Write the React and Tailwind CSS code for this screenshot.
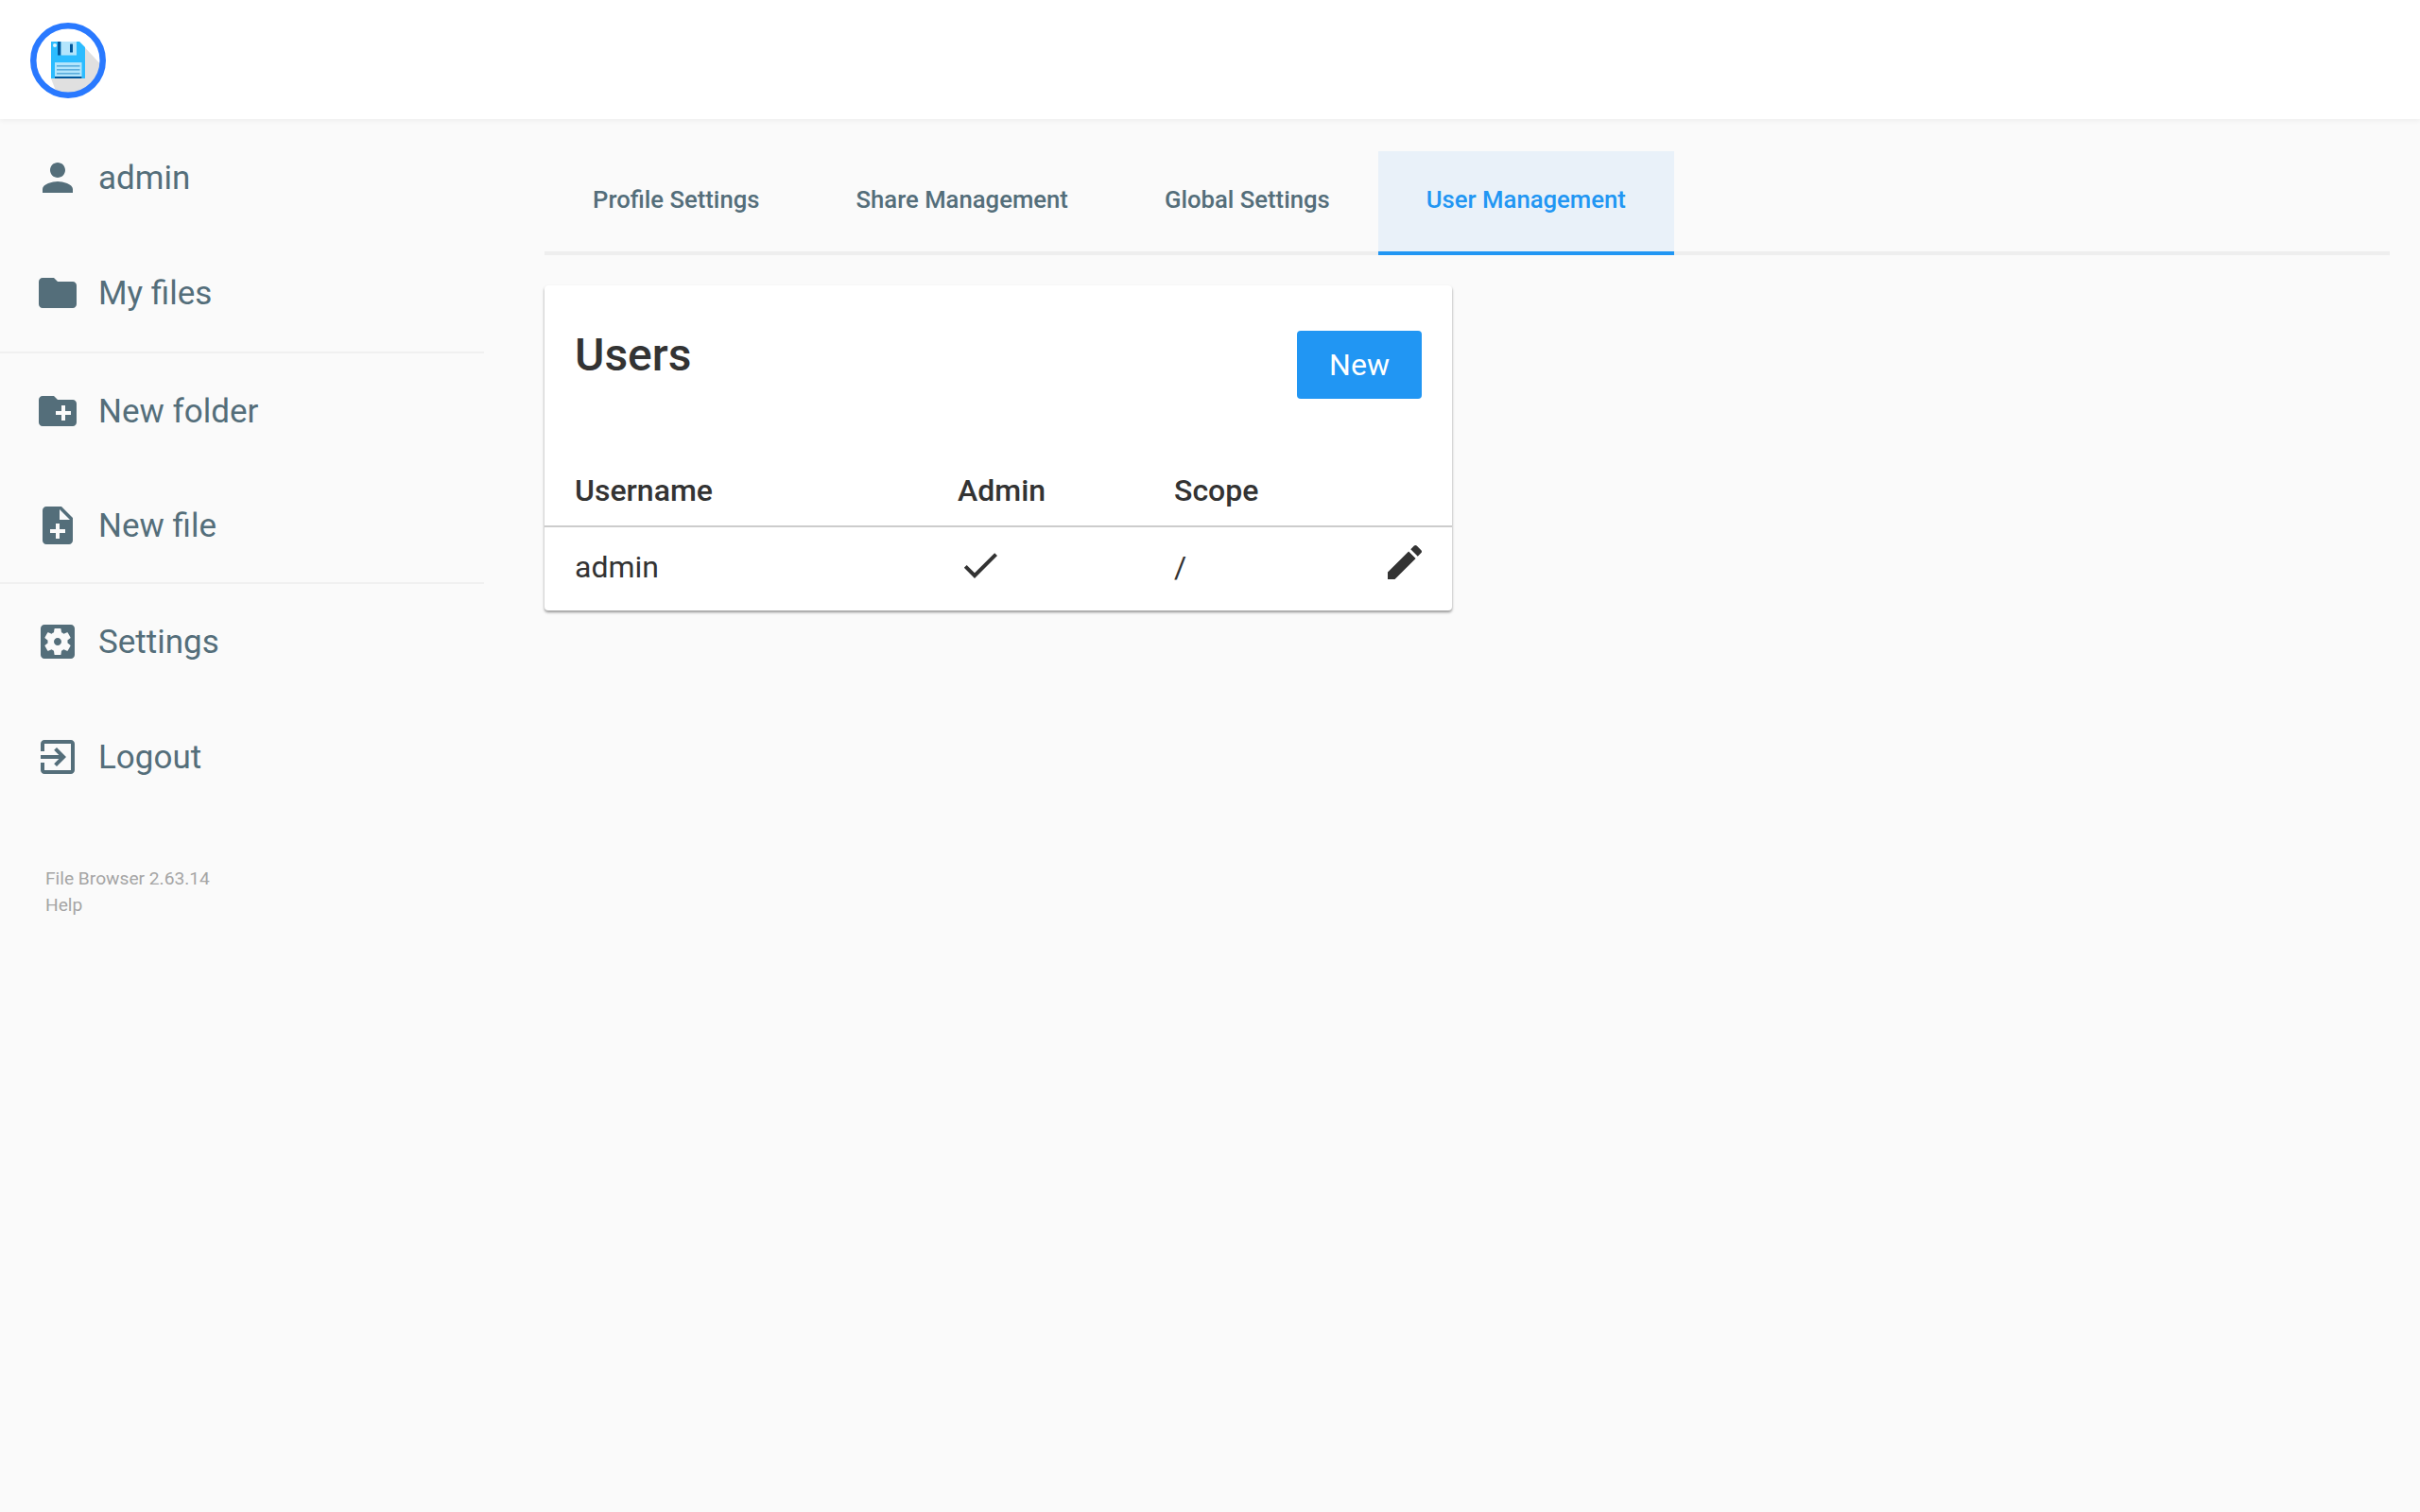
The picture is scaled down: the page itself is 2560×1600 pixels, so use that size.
import React from 'react';

const paths = {
  person: 'M12 12c2.21 0 4-1.79 4-4s-1.79-4-4-4-4 1.79-4 4 1.79 4 4 4zm0 2c-2.67 0-8 1.34-8 4v2h16v-2c0-2.66-5.33-4-8-4z',
  folder: 'M10 4H4c-1.1 0-1.99.9-1.99 2L2 18c0 1.1.9 2 2 2h16c1.1 0 2-.9 2-2V8c0-1.1-.9-2-2-2h-8l-2-2z',
  newFolder: 'M20 6h-8l-2-2H4c-1.11 0-1.99.89-1.99 2L2 18c0 1.11.89 2 2 2h16c1.11 0 2-.89 2-2V8c0-1.11-.89-2-2-2zm-1 8h-3v3h-2v-3h-3v-2h3V9h2v3h3v2z',
  newFile: 'M14 2H6c-1.1 0-1.99.9-1.99 2L4 20c0 1.1.89 2 1.99 2H18c1.1 0 2-.9 2-2V8l-6-6zm2 14h-3v3h-2v-3H8v-2h3v-3h2v3h3v2zm-3-7V3.5L18.5 9H13z',
  settings: 'M12 10c-1.1 0-2 .9-2 2s.9 2 2 2 2-.9 2-2-.9-2-2-2zm7-7H5c-1.11 0-2 .9-2 2v14c0 1.1.89 2 2 2h14c1.11 0 2-.9 2-2V5c0-1.1-.89-2-2-2zm-1.75 9c0 .23-.02.46-.05.68l1.48 1.16c.13.11.17.3.08.45l-1.4 2.42c-.09.15-.27.21-.43.15l-1.74-.7c-.36.28-.76.51-1.18.69l-.26 1.85c-.03.17-.18.3-.35.3h-2.8c-.17 0-.32-.13-.35-.29l-.26-1.85c-.43-.18-.82-.41-1.18-.69l-1.74.7c-.16.06-.34 0-.43-.15l-1.4-2.42c-.09-.15-.05-.34.08-.45l1.48-1.16c-.03-.23-.05-.46-.05-.69 0-.23.02-.46.05-.68l-1.48-1.16c-.13-.11-.17-.3-.08-.45l1.4-2.42c.09-.15.27-.21.43-.15l1.74.7c.36-.28.76-.51 1.18-.69l.26-1.85c.03-.17.18-.3.35-.3h2.8c.17 0 .32.13.35.29l.26 1.85c.43.18.82.41 1.18.69l1.74-.7c.16-.06.34 0 .43.15l1.4 2.42c.09.15.05.34-.08.45l-1.48 1.16c.03.23.05.46.05.69z',
  logout: 'M10.09 15.59L11.5 17l5-5-5-5-1.41 1.41L12.67 11H3v2h9.67l-2.58 2.59zM19 3H5c-1.11 0-2 .9-2 2v4h2V5h14v14H5v-4H3v4c0 1.1.89 2 2 2h14c1.1 0 2-.9 2-2V5c0-1.1-.9-2-2-2z',
  check: 'M9 16.17L4.83 12l-1.42 1.41L9 19 21 7l-1.41-1.41z',
  edit: 'M3 17.25V21h3.75L17.81 9.94l-3.75-3.75L3 17.25zM20.71 7.04c.39-.39.39-1.02 0-1.41l-2.34-2.34c-.39-.39-1.02-.39-1.41 0l-1.83 1.83 3.75 3.75 1.83-1.83z',
};

const Icon = ({ name, className = '' }) => (
  <svg viewBox="0 0 24 24" fill="currentColor" className={`w-12 h-12 shrink-0 ${className}`}>
    <path d={paths[name]} />
  </svg>
);

// Floppy disk in a blue ring
const Logo = () => (
  <svg viewBox="0 0 80 80" className="w-20 h-20">
    <defs>
      <clipPath id="logo-clip">
        <circle cx="40" cy="40" r="36" />
      </clipPath>
    </defs>
    <circle cx="40" cy="40" r="36.5" fill="#fff" />
    <path d="M52 20 L80 50 L60 80 L30 80 L22 59 Z" fill="#e0e0e0" clipPath="url(#logo-clip)" />
    <path d="M22 20 H52 L58 26 V59 H22 Z" fill="#2cbcff" />
    <rect x="29" y="20" width="3.5" height="14.5" fill="#01579b" />
    <rect x="32.5" y="20" width="16.5" height="14.5" fill="#b3e5fc" />
    <rect x="42" y="22.5" width="3" height="9" rx="0.5" fill="#01579b" />
    <circle cx="26" cy="24" r="2" fill="#e1f5fe" />
    <rect x="26" y="42" width="28.5" height="17" fill="#b3e5fc" />
    <rect x="26" y="57" width="28.5" height="2" fill="#01579b" />
    <rect x="28" y="45.5" width="24.5" height="0.8" fill="#0277bd" />
    <rect x="28" y="49.5" width="24.5" height="0.8" fill="#0277bd" />
    <rect x="28" y="53.5" width="24.5" height="0.8" fill="#0277bd" />
    <circle cx="40" cy="40" r="36.75" fill="none" stroke="#2979ff" strokeWidth="6.5" />
  </svg>
);

const SidebarItem = ({ icon, label, short }) => (
  <div className={`flex items-center ${short ? 'h-[121px]' : 'h-[122px]'} pl-[37px] gap-[19px] text-[35px] text-[#546e7a]`}>
    <Icon name={icon} />
    <span className="pt-[3px]">{label}</span>
  </div>
);

const Divider = () => <div className="h-[2px] bg-[#f0f0f0]" />;

const Tab = ({ label, active }) => (
  <div
    className={`flex items-center h-[110px] px-[51px] pb-[3px] -mb-1 border-b-4 text-[25.7px] font-medium ${
      active ? 'bg-[#e9f1f9] border-[#2196f3] text-[#2196f3]' : 'border-transparent text-[#546e7a]'
    }`}
  >
    {label}
  </div>
);

export default function App() {
  return (
    <div className="min-h-[1600px] bg-[#fafafa] font-['Roboto',sans-serif]">
      <header className="flex items-center h-[126px] pl-8 pt-px bg-white shadow-[0_2px_5px_rgba(0,0,0,0.05)]">
        <Logo />
      </header>

      <div className="flex">
        <aside className="w-[512px] shrink-0 pt-px">
          <SidebarItem icon="person" label="admin" />
          <SidebarItem icon="folder" label="My files" />
          <div className="mt-px"><Divider /></div>
          <SidebarItem icon="newFolder" label="New folder" short />
          <SidebarItem icon="newFile" label="New file" short />
          <Divider />
          <SidebarItem icon="settings" label="Settings" />
          <SidebarItem icon="logout" label="Logout" short />
          <div className="mt-[55px] pl-12 text-[19.2px] leading-[28px] text-[#a5a5a5]">
            <p>File Browser 2.63.14</p>
            <p>Help</p>
          </div>
        </aside>

        <main className="flex-1 pt-[34px] pl-16 pr-8">
          <div className="flex border-b-4 border-[#eeeeee]">
            <Tab label="Profile Settings" />
            <Tab label="Share Management" />
            <Tab label="Global Settings" />
            <Tab label="User Management" active />
          </div>

          <div className="w-[960px] mt-8 bg-white rounded-[4px] shadow-[0_2px_3px_rgba(0,0,0,0.4)] text-[#333333]">
            <div className="flex justify-between items-start h-[182px] pt-[45px] px-8">
              <h2 className="text-[48px] leading-[58px] font-medium">Users</h2>
              <button className="w-[132px] h-[72px] mt-[3px] pb-px rounded-[4px] bg-[#2196f3] text-white text-[32px]">New</button>
            </div>
            <table className="w-full table-fixed">
              <thead>
                <tr className="h-[73px] border-b-2 border-[#cccccc] text-[32px]">
                  <th className="w-[437px] pl-8 pb-[3px] text-left font-medium">Username</th>
                  <th className="w-[229px] pb-[3px] text-left font-medium">Admin</th>
                  <th className="pb-[3px] text-left font-medium">Scope</th>
                </tr>
              </thead>
              <tbody>
                <tr className="h-[89px] text-[32px]">
                  <td className="pl-8 pb-1">admin</td>
                  <td className="pb-1"><Icon name="check" className="mb-1" /></td>
                  <td className="pb-1">
                    <div className="flex items-center justify-between pr-[26px]">
                      <span>/</span>
                      <Icon name="edit" className="mb-[10px]" />
                    </div>
                  </td>
                </tr>
              </tbody>
            </table>
          </div>
        </main>
      </div>
    </div>
  );
}
